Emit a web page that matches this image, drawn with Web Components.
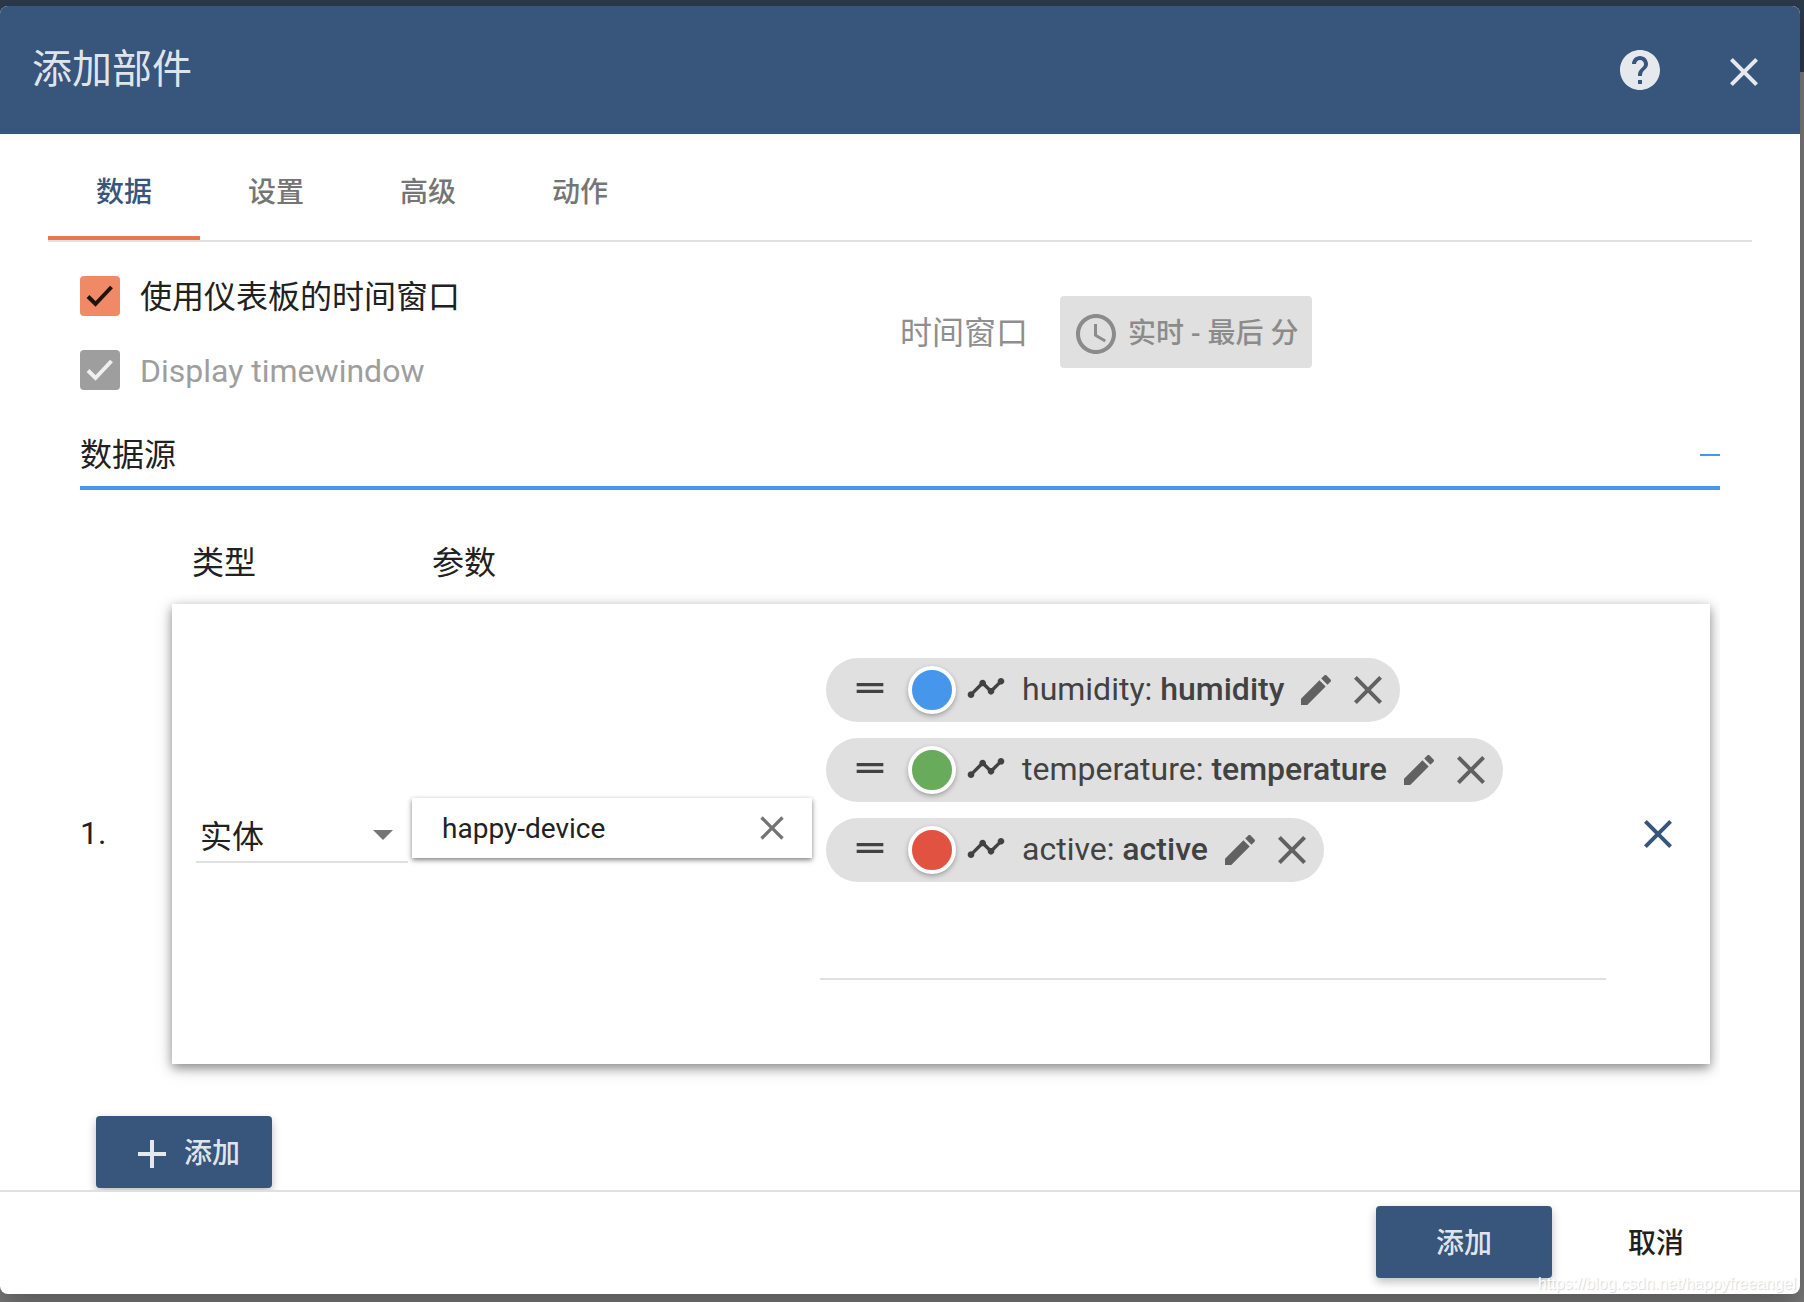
<!DOCTYPE html>
<html lang="zh-CN">
<head>
<meta charset="utf-8">
<meta name="viewport" content="width=device-width, initial-scale=1">
<title>添加部件</title>
<style>
  :root {
    --primary: #38567c;
    --accent: #ec7550;
    --link: #4696ec;
    --text: #212121;
    --muted: #9e9e9e;
    --line: #e0e0e0;
    --s-title: 40px;
    --s-body: 32px;
    --s-button: 28px;
  }
  html, body { height: 100%; }
  body {
    margin: 0;
    overflow: hidden;
    font: 400 32px/48px Roboto, "Noto Sans CJK SC", sans-serif;
    color: var(--text);
    background: linear-gradient(#2b394b 72px, #7a7a7a 72px);
  }
</style>
</head>
<body>
<tb-dialog>
  <span slot="title">添加部件</span>
  <tb-icon-button slot="tools" icon="help" label="帮助"></tb-icon-button>
  <tb-icon-button slot="tools" icon="close" label="关闭" class="low"></tb-icon-button>
  <tb-tabs labels="数据,设置,高级,动作"></tb-tabs>
  <tb-data-panel></tb-data-panel>
  <tb-button slot="actions" variant="raised">添加</tb-button>
  <tb-button slot="actions" variant="flat">取消</tb-button>
  <tb-watermark slot="mark">https://blog.csdn.net/happyfreeangel</tb-watermark>
</tb-dialog>

<script>
const define = (name, html, setup) => customElements.define(name, class extends HTMLElement {
  connectedCallback() {
    if (this.shadowRoot) return;
    const root = this.attachShadow({ mode: "open" });
    const tpl = document.createElement("template");
    tpl.innerHTML = `<style>*{box-sizing:border-box}button,input,select{font:inherit;color:inherit;margin:0;padding:0;border:0;background:none;border-radius:0;outline:0}</style>`
      + (typeof html === "function" ? html(this) : html);
    root.append(tpl.content.cloneNode(true));
    if (setup) setup(this, root);
  }
});

const ICONS = {
  help: '<path d="M12 2C6.48 2 2 6.48 2 12s4.48 10 10 10 10-4.48 10-10S17.52 2 12 2zm1 17h-2v-2h2v2zm2.07-7.75l-.9.92C13.45 12.9 13 13.5 13 15h-2v-.5c0-1.1.45-2.1 1.17-2.83l1.24-1.26c.37-.36.59-.86.59-1.41 0-1.1-.9-2-2-2s-2 .9-2 2H8c0-2.21 1.79-4 4-4s4 1.79 4 4c0 .88-.36 1.68-.93 2.25z"/>',
  close: '<path d="M19 6.41L17.59 5 12 10.59 6.41 5 5 6.41 10.59 12 5 17.59 6.41 19 12 13.41 17.59 19 19 17.59 13.41 12z"/>',
  clock: '<path d="M11.99 2C6.47 2 2 6.48 2 12s4.47 10 9.99 10C17.52 22 22 17.52 22 12S17.52 2 11.99 2zM12 20c-4.42 0-8-3.58-8-8s3.58-8 8-8 8 3.58 8 8-3.58 8-8 8zm.5-13H11v6l5.25 3.15.75-1.23-4.5-2.67z"/>',
  drag: '<path d="M20 9H4v2h16V9zM4 15h16v-2H4v2z"/>',
  timeline: '<path d="M23 8c0 1.1-.9 2-2 2-.18 0-.35-.02-.51-.07l-3.56 3.55c.05.16.07.34.07.52 0 1.1-.9 2-2 2s-2-.9-2-2c0-.18.02-.36.07-.52l-2.55-2.55c-.16.05-.34.07-.52.07s-.36-.02-.52-.07l-4.55 4.56c.05.16.07.33.07.51 0 1.1-.9 2-2 2s-2-.9-2-2 .9-2 2-2c.18 0 .35.02.51.07l4.56-4.55C8.02 9.36 8 9.18 8 9c0-1.1.9-2 2-2s2 .9 2 2c0 .18-.02.36-.07.52l2.55 2.55c.16-.05.34-.07.52-.07s.36.02.52.07l3.55-3.56C19.02 8.35 19 8.18 19 8c0-1.1.9-2 2-2s2 .9 2 2z"/>',
  edit: '<path d="M3 17.25V21h3.75L17.81 9.94l-3.75-3.75L3 17.25zM20.71 7.04c.39-.39.39-1.02 0-1.41l-2.34-2.34c-.39-.39-1.02-.39-1.41 0l-1.83 1.83 3.75 3.75 1.83-1.83z"/>',
  add: '<path d="M19 13h-6v6h-2v-6H5v-2h6V5h2v6h6v2z"/>'
};

/* Square glyph, sized by --icon and painted in the current colour */
define("tb-icon", el => `
  <style>:host{display:block;flex:none;width:var(--icon,48px);height:var(--icon,48px)}svg{display:block;width:100%;height:100%;fill:currentColor}</style>
  <svg viewBox="0 0 24 24" aria-hidden="true">${ICONS[el.getAttribute("name")]}</svg>`);

define("tb-icon-button", el => `
  <style>
    :host{display:block;flex:none}
    :host(.low){padding-top:4px}
    button{display:flex;align-items:center;justify-content:center;width:var(--hit,80px);height:var(--hit,80px);cursor:pointer}
  </style>
  <button type="button" aria-label="${el.getAttribute("label")}"><tb-icon name="${el.getAttribute("icon")}"></tb-icon></button>`);

define("tb-button", el => `
  <style>
    :host{display:block;flex:none}
    button{display:flex;align-items:center;justify-content:center;gap:8px;min-width:176px;height:72px;padding:4px 12px 0;border-radius:4px;font-size:var(--s-button);font-weight:500;cursor:pointer}
    .raised{background:var(--primary);color:rgba(255,255,255,.87);box-shadow:0 4px 10px rgba(0,0,0,.26)}
    .tonal{padding-right:14px;background:#e0e0e0;color:#8b8b8b}
    .icon-left{padding-right:12px}
  </style>
  <button type="button" class="${el.getAttribute("variant")} ${el.getAttribute("icon") === "add" ? "icon-left" : ""}" ${el.hasAttribute("disabled") ? "disabled" : ""}>
    ${el.getAttribute("icon") ? `<tb-icon name="${el.getAttribute("icon")}"></tb-icon>` : ""}<span><slot></slot></span>
  </button>`);

define("tb-dialog", `
  <style>
    :host{display:block;height:100vh;padding:6px 4px 8px 0;box-sizing:border-box}
    .dialog{position:relative;display:flex;flex-direction:column;height:100%;background:#fff;border-radius:8px;overflow:hidden}
    .shade{height:100%;border-radius:8px;box-shadow:0 14px 30px rgba(0,0,0,.28)}
    header{display:flex;align-items:center;flex:none;height:128px;padding:0 16px 0 32px;background:var(--primary);color:rgba(255,255,255,.87)}
    h2{flex:1;margin:0;font-size:var(--s-title);font-weight:400}
    .tools{display:flex;align-items:center;gap:24px}
    main{flex:1;min-height:0;overflow:hidden}
    footer{display:flex;justify-content:flex-end;gap:16px;flex:none;padding:14px 56px 16px;border-top:2px solid var(--line)}
    .mark{position:absolute;right:4px;bottom:0}
  </style>
  <div class="shade"><section class="dialog" role="dialog" aria-label="添加部件">
    <header><h2><slot name="title"></slot></h2><div class="tools"><slot name="tools"></slot></div></header>
    <main><slot></slot></main>
    <footer><slot name="actions"></slot></footer>
    <div class="mark"><slot name="mark"></slot></div>
  </section></div>`);

define("tb-watermark", `
  <style>:host{display:block;font:16px/20px "Liberation Sans",sans-serif;color:#fff;text-shadow:1px 1px 1px rgba(0,0,0,.16)}</style>
  <slot></slot>`);

define("tb-tabs", el => `
  <style>
    :host{display:block;padding:0 48px}
    nav{display:flex;border-bottom:2px solid var(--line)}
    button{height:106px;padding:16px 48px 0;font-size:var(--s-button);font-weight:500;color:#757575;border-bottom:4px solid transparent;cursor:pointer}
    button[aria-selected=true]{color:var(--primary);border-color:var(--accent)}
  </style>
  <nav role="tablist">${el.getAttribute("labels").split(",").map((t, i) =>
    `<button type="button" role="tab" aria-selected="${i === 0}">${t}</button>`).join("")}</nav>`);

define("tb-checkbox", el => `
  <style>
    :host{display:block}
    label{display:flex;align-items:center;gap:20px;height:40px}
    .box{display:grid;width:40px;height:40px;flex:none}
    .box > *{grid-area:1/1}
    input{appearance:none;width:40px;height:40px;border-radius:4px;background:#f08965}
    svg{width:40px;height:40px;fill:none;stroke:#1d1411;stroke-width:4;pointer-events:none}
    .text{padding-top:2px}
    :host([disabled]) input{background:var(--muted)}
    :host([disabled]) svg{stroke:#efefef}
    :host([disabled]) label{color:var(--muted)}
  </style>
  <label><span class="box"><input type="checkbox" checked ${el.hasAttribute("disabled") ? "disabled" : ""}><svg viewBox="0 0 40 40" aria-hidden="true"><path d="M8 20.500l7.500 7.500L31.500 11"/></svg></span><span class="text"><slot></slot></span></label>`);

define("tb-select", el => `
  <style>
    :host{display:block}
    .field{display:grid;align-items:center;border-bottom:2px solid var(--line)}
    .field > *{grid-area:1/1}
    select{appearance:none;width:100%;height:48px;padding:0 48px 0 4px;line-height:48px}
    i{justify-self:end;margin:0 15px 4px 0;border:10px solid transparent;border-top:10px solid #757575;border-bottom:0;pointer-events:none}
  </style>
  <div class="field"><select aria-label="${el.getAttribute("label")}"><option>${el.getAttribute("value")}</option></select><i></i></div>`);

define("tb-autocomplete", el => `
  <style>
    :host{display:block;--icon:40px;--hit:40px}
    .field{display:flex;align-items:center;height:60px;padding:0 20px 0 30px;background:#fff;box-shadow:0 2px 5px rgba(0,0,0,.5);color:var(--text)}
    input{flex:1;min-width:0;height:56px;font-size:var(--s-button)}
    tb-icon-button{color:#757575}
  </style>
  <div class="field"><input type="text" aria-label="${el.getAttribute("label")}" value="${el.getAttribute("value")}"><tb-icon-button icon="close" label="清除"></tb-icon-button></div>`);

define("tb-key-chip", el => `
  <style>
    :host{display:block;color:#424242}
    .chip{display:flex;align-items:center;width:max-content;height:64px;padding:0 8px 0 24px;border-radius:32px;background:#e0e0e0}
    .small{--icon:40px}
    .raise{padding-bottom:4px}
    .dot{width:48px;height:48px;margin:0 10px 0 18px;border:4px solid #fff;border-radius:50%;background:${el.getAttribute("color")};box-shadow:0 2px 5px rgba(0,0,0,.3)}
    .text{margin:0 12px 0 16px;padding-bottom:2px;white-space:pre}
    b{font-weight:500}
    .edit{--icon:40px;--hit:40px;margin-right:8px;color:#616161}
    .remove{--hit:48px;color:#616161}
  </style>
  <div class="chip">
    <div class="small raise"><tb-icon name="drag"></tb-icon></div>
    <span class="dot"></span>
    <div class="small raise"><tb-icon name="timeline"></tb-icon></div>
    <span class="text">${el.getAttribute("key")}: <b>${el.getAttribute("key")}</b></span>
    <tb-icon-button class="edit" icon="edit" label="编辑"></tb-icon-button>
    <tb-icon-button class="remove" icon="close" label="删除"></tb-icon-button>
  </div>`);

define("tb-key-chips", `
  <style>
    :host{display:block}
    .chips{display:flex;flex-direction:column;gap:16px;padding-left:6px}
    .entry{display:block;width:100%;height:98px;border-bottom:2px solid var(--line)}
  </style>
  <div class="chips"><slot></slot></div>
  <input class="entry" type="text" aria-label="数据键">`);

define("tb-datasource", `
  <style>
    :host{display:flex;align-items:center;padding:10px 10px 52px 0;overflow:hidden}
    .number{flex:none;width:92px;padding-bottom:2px}
    .card{flex:1;min-width:0;display:flex;align-items:center;min-height:460px;padding-left:24px;background:#fff;box-shadow:0 4px 10px rgba(0,0,0,.4),0 4px 20px rgba(0,0,0,.12)}
    tb-select{width:212px;margin-right:4px;padding-top:8px}
    tb-autocomplete{width:400px;margin-right:8px;padding-bottom:12px}
    tb-key-chips{flex:1;min-width:0;align-self:flex-start;padding-top:54px}
    .remove{--hit:104px;color:var(--primary)}
  </style>
  <span class="number">1.</span>
  <div class="card">
    <tb-select label="类型" value="实体"></tb-select>
    <tb-autocomplete label="实体别名" value="happy-device"></tb-autocomplete>
    <tb-key-chips>
      <tb-key-chip key="humidity" color="#4696ec"></tb-key-chip>
      <tb-key-chip key="temperature" color="#67ab5b"></tb-key-chip>
      <tb-key-chip key="active" color="#e25241"></tb-key-chip>
    </tb-key-chips>
    <tb-icon-button class="remove" icon="close" label="删除数据源"></tb-icon-button>
  </div>`);

define("tb-data-panel", `
  <style>
    :host{display:block;padding:34px 80px 0}
    .time{display:grid;grid-template-columns:1fr 1fr;align-items:center}
    .checks{display:flex;flex-direction:column;gap:34px}
    .window{display:flex;align-items:center;gap:32px;color:#8f8f8f}
    .window tb-button{padding-bottom:2px}
    .bar{display:flex;align-items:center;justify-content:space-between;margin-top:41px;padding-bottom:7px;border-bottom:4px solid var(--link)}
    h3{margin:0;font-size:var(--s-body);font-weight:400}
    .fold{width:20px;height:48px;display:flex;align-items:center;border:0;padding:0;background:none;cursor:pointer}
    .fold i{width:20px;height:2px;background:var(--link)}
    .heads{display:flex;padding:49px 0 7px 112px}
    .heads span{width:240px}
    tb-button.add{width:max-content;margin-left:16px}
  </style>
  <div class="time">
    <div class="checks"><tb-checkbox>使用仪表板的时间窗口</tb-checkbox><tb-checkbox disabled>Display timewindow</tb-checkbox></div>
    <div class="window"><span>时间窗口</span><tb-button variant="tonal" icon="clock" disabled>实时 - 最后 分</tb-button></div>
  </div>
  <div class="bar"><h3>数据源</h3><button class="fold" type="button" aria-label="折叠"><i></i></button></div>
  <div class="heads"><span>类型</span><span>参数</span></div>
  <tb-datasource></tb-datasource>
  <tb-button class="add" variant="raised" icon="add">添加</tb-button>`);
</script>
</body>
</html>
